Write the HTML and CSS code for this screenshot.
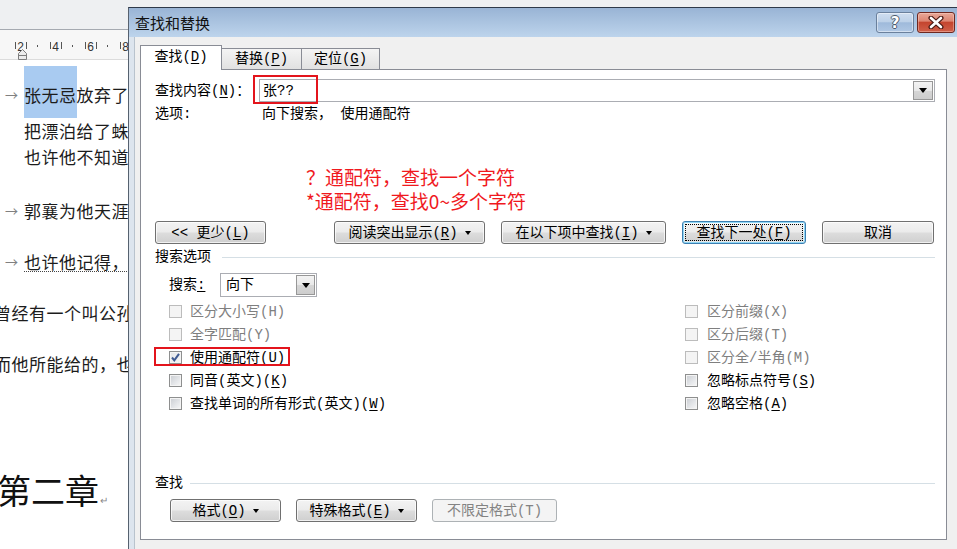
FILE: index.html
```html
<!DOCTYPE html>
<html lang="zh">
<head>
<meta charset="utf-8">
<title>查找和替换</title>
<link rel="stylesheet" href="styles.css">
</head>
<body>
<div class="screen">
  <div class="doc">
    <div class="doc-top"></div>
    <div class="ruler">
      <svg class="ruler-svg" width="140" height="30" viewBox="0 0 140 30">
        <g fill="#555">
          <rect x="15" y="12" width="1" height="7"/>
          <rect x="26" y="12" width="1" height="7"/>
          <rect x="37" y="15" width="1" height="2"/>
          <rect x="50" y="12" width="1" height="7"/>
          <rect x="61" y="12" width="1" height="7"/>
          <rect x="72" y="15" width="1" height="2"/>
          <rect x="85" y="12" width="1" height="7"/>
          <rect x="96" y="12" width="1" height="7"/>
          <rect x="107" y="15" width="1" height="2"/>
          <rect x="120" y="12" width="1" height="7"/>
        </g>
        <g class="ruler-num" fill="#333" font-size="12" text-anchor="middle">
          <text x="20.5" y="21">2</text>
          <text x="55.5" y="21">4</text>
          <text x="90.5" y="21">6</text>
          <text x="125.5" y="21">8</text>
        </g>
        <path d="M18.5 29.5 V23.5 L22.5 19.5 L26.5 23.5 V29.5 Z" fill="#ececec" stroke="#7d7d7d"/>
        <path d="M18.5 25.5 H26.5" stroke="#7d7d7d"/>
      </svg>
    </div>
    <div class="page">
      <div class="line l1"><span class="tabmark">→</span><span class="sel">张无忌</span><span>放弃了一切，</span></div>
      <div class="line ind">把漂泊给了蛛儿，</div>
      <div class="line ind">也许他不知道，</div>
      <div class="line l4"><span class="tabmark">→</span><span>郭襄为他天涯</span></div>
      <div class="line l5"><span class="tabmark">→</span><span class="dotted">也许他记得，</span></div>
      <div class="line l6">曾经有一个叫公孙</div>
      <div class="line l7">而他所能给的，也</div>
      <div class="heading">第二章<span class="pmark">↵</span></div>
    </div>
  </div>

  <div class="dialog">
    <div class="titlebar">
      <span class="title">查找和替换</span>
      <span class="tb-help">?</span>
      <span class="tb-close">
        <svg width="18" height="13" viewBox="0 0 18 13">
          <path d="M4 2 L14 11 M14 2 L4 11" stroke="#4a1a14" stroke-width="5" stroke-linecap="round"/>
          <path d="M4 2 L14 11 M14 2 L4 11" stroke="#ffffff" stroke-width="2.6" stroke-linecap="round"/>
        </svg>
      </span>
    </div>
    <div class="dlg-body">
      <div class="tabs">
        <div class="tab tab-active">查找(<u>D</u>)</div>
        <div class="tab tab-inactive t2">替换(<u>P</u>)</div>
        <div class="tab tab-inactive t3">定位(<u>G</u>)</div>
      </div>
      <div class="panel">
        <div class="find-row">
          <span class="find-lbl">查找内容(<u>N</u>)：</span>
          <div class="combo">
            <span class="combo-text">张??</span>
            <span class="drop"><span class="tri"></span></span>
          </div>
        </div>
        <div class="opt-row">
          <span class="opt-lbl">选项:</span>
          <span>向下搜索， 使用通配符</span>
        </div>

        <div class="btn-row">
          <span class="btn b1">&lt;&lt; 更少(<u>L</u>)</span>
          <span class="btn b2">阅读突出显示(<u>R</u>)<span class="dd"></span></span>
          <span class="btn b3">在以下项中查找(<u>I</u>)<span class="dd"></span></span>
          <span class="btn btn-default b4">查找下一处(<u>F</u>)</span>
          <span class="btn b5">取消</span>
        </div>

        <div class="grp">搜索选项</div>

        <div class="search-row">
          <span class="search-lbl">搜索<u>:</u></span>
          <div class="select">
            <span class="combo-text">向下</span>
            <span class="drop"><span class="tri"></span></span>
          </div>
        </div>

        <div class="checks">
          <div class="col">
            <div class="chk-row disabled"><span class="cb"></span>区分大小写(H)</div>
            <div class="chk-row disabled"><span class="cb"></span>全字匹配(Y)</div>
            <div class="chk-row"><span class="cb checked"><svg width="11" height="11" viewBox="0 0 11 11"><path d="M2 5.5 L4.3 8.3 L9 1.8" fill="none" stroke="#3f5a92" stroke-width="2"/></svg></span>使用通配符(<u>U</u>)</div>
            <div class="chk-row"><span class="cb"></span>同音(英文)(<u>K</u>)</div>
            <div class="chk-row"><span class="cb"></span>查找单词的所有形式(英文)(<u>W</u>)</div>
          </div>
          <div class="col right">
            <div class="chk-row disabled"><span class="cb"></span>区分前缀(X)</div>
            <div class="chk-row disabled"><span class="cb"></span>区分后缀(T)</div>
            <div class="chk-row disabled"><span class="cb"></span>区分全/半角(M)</div>
            <div class="chk-row"><span class="cb"></span>忽略标点符号(<u>S</u>)</div>
            <div class="chk-row"><span class="cb"></span>忽略空格(<u>A</u>)</div>
          </div>
        </div>

        <div class="grp grp2">查找</div>

        <div class="btn-row bottom-row">
          <span class="btn c1">格式(<u>O</u>)<span class="dd"></span></span>
          <span class="btn c2">特殊格式(<u>E</u>)<span class="dd"></span></span>
          <span class="btn btn-disabled c3">不限定格式(T)</span>
        </div>

        <div class="note">？通配符，查找一个字符<br>*通配符，查找0~多个字符</div>
        <div class="redbox rb1"></div>
        <div class="redbox rb2"></div>
      </div>
    </div>
  </div>
</div>
</body>
</html>
```

FILE: styles.css
```css
* {
  box-sizing: border-box;
  margin: 0;
  padding: 0;
}

html, body {
  width: 957px;
  height: 549px;
  overflow: hidden;
  background: #ffffff;
}

body {
  font-family: "Noto Sans CJK SC", sans-serif;
}

.screen {
  position: relative;
  width: 957px;
  height: 549px;
  overflow: hidden;
}

/* ---------- background document ---------- */
.doc {
  width: 957px;
  height: 549px;
  background: #ffffff;
}

.doc-top {
  height: 30px;
  background: #eef0f2;
  border-bottom: 1px solid #a5aab1;
}

.ruler {
  height: 30px;
  background: #f7f7f7;
  border-bottom: 1px solid #dcdcdc;
}

.ruler-svg {
  display: block;
}

.ruler-num {
  font-family: "Liberation Sans", sans-serif;
}

.page {
  font-family: "Noto Sans CJK SC", sans-serif;
  font-size: 17px;
  letter-spacing: 0.5px;
  color: #1c1c1c;
  white-space: nowrap;
}

.line {
  display: flex;
  height: 26px;
  line-height: 26px;
}

.ind {
  padding-left: 24px;
}

.l1 {
  margin-top: 6px;
  height: 52px;
}

.l1 > span {
  padding-top: 16px;
}

.sel {
  background: #a9cbf1;
}

.tabmark {
  width: 24px;
  padding-left: 5px;
  font-size: 13px;
  color: #808080;
  letter-spacing: 0;
}

.l4 {
  margin-top: 28px;
}

.l5 {
  margin-top: 25px;
}

.dotted {
  background-image: linear-gradient(to right, #444 50%, transparent 50%);
  background-size: 2px 1px;
  background-repeat: repeat-x;
  background-position: 0 22px;
}

.l6 {
  margin-top: 25px;
  margin-left: -6px;
}

.l7 {
  margin-top: 25px;
  margin-left: -6px;
}

.heading {
  margin-top: 93px;
  margin-left: -3px;
  font-size: 34px;
  line-height: 40px;
  letter-spacing: 0;
  color: #111;
}

.pmark {
  font-size: 10px;
  color: #888;
  margin-left: 1px;
}

/* ---------- dialog ---------- */
.dialog {
  position: absolute;
  left: 128px;
  top: 7px;
  width: 840px;
  height: 550px;
  border-top: 1px solid #2e3a4a;
  border-left: 1px solid #56616f;
  background: #f0f0f0;
  display: flex;
  flex-direction: column;
  font-family: "Liberation Mono", "Noto Sans CJK SC", monospace;
  font-size: 14px;
  color: #000;
}

.dialog u {
  text-underline-offset: 2px;
}

.titlebar {
  flex: none;
  height: 29px;
  display: flex;
  align-items: flex-start;
  padding-left: 6px;
  background: linear-gradient(#99b4d5, #bdd4ec);
}

.title {
  font-family: "Noto Sans CJK SC", sans-serif;
  font-size: 15px;
  line-height: 29px;
  color: #111;
}

.tb-help {
  margin-left: auto;
  margin-top: 4px;
  width: 38px;
  height: 21px;
  border: 1px solid #6a809c;
  border-radius: 3px;
  background: linear-gradient(#cfdef0 0%, #bdd1e8 45%, #9fbadb 52%, #b0c8e4 100%);
  box-shadow: inset 0 0 0 1px rgba(255, 255, 255, 0.45);
  display: flex;
  align-items: center;
  justify-content: center;
  font-family: "DejaVu Sans", sans-serif;
  font-weight: bold;
  font-size: 15px;
  color: #fff;
  text-shadow: 1px 0 0 #4c5a6c, -1px 0 0 #4c5a6c, 0 1px 0 #4c5a6c, 0 -1px 0 #4c5a6c;
}

.tb-close {
  margin-left: 3px;
  margin-right: 13px;
  margin-top: 4px;
  width: 38px;
  height: 21px;
  border: 1px solid #6e2820;
  border-radius: 3px;
  background: linear-gradient(#e9a898 0%, #dd8572 42%, #c4452f 50%, #d0604a 100%);
  box-shadow: inset 0 0 0 1px rgba(255, 220, 210, 0.4);
  display: flex;
  align-items: center;
  justify-content: center;
}

.tb-close svg {
  display: block;
}

.dlg-body {
  flex: 1;
  border-left: 5px solid #dde5ee;
  box-shadow: inset 1px 0 0 #b9c3cd;
  padding: 8px 0 0 6px;
}

/* tabs */
.tabs {
  display: flex;
  align-items: flex-end;
  height: 25px;
  margin-bottom: -1px;
  position: relative;
  z-index: 1;
}

.tab {
  display: flex;
  align-items: center;
  justify-content: center;
  border: 1px solid #898c95;
  line-height: 16px;
}

.tab-active {
  width: 82px;
  height: 25px;
  border-bottom: none;
  background: #ffffff;
  padding-bottom: 2px;
}

.tab-inactive {
  height: 22px;
  border-left: none;
  background: linear-gradient(#f4f4f4, #e1e1e1);
}

.t2 {
  width: 80px;
}

.t3 {
  width: 78px;
}

/* panel */
.panel {
  position: relative;
  width: 807px;
  height: 471px;
  background: #ffffff;
  border: 1px solid #898c95;
}

.find-row {
  display: flex;
  align-items: center;
  height: 23px;
  margin-top: 9px;
  padding-left: 14px;
  padding-right: 11px;
}

.find-lbl {
  width: 104px;
  flex: none;
  line-height: 16px;
}

.combo {
  flex: 1;
  height: 23px;
  border: 1px solid #abadb3;
  display: flex;
  align-items: center;
  padding-left: 3px;
  background: #fff;
}

.combo-text {
  line-height: 16px;
}

.drop {
  margin-left: auto;
  margin-right: 1px;
  width: 20px;
  height: 19px;
  border: 1px solid #979797;
  background: linear-gradient(#f3f3f3 0%, #e8e8e8 50%, #d6d6d6 51%, #cdcdcd 100%);
  display: flex;
  align-items: center;
  justify-content: center;
}

.tri {
  width: 0;
  height: 0;
  border-left: 4px solid transparent;
  border-right: 4px solid transparent;
  border-top: 5px solid #000;
}

.opt-row {
  display: flex;
  margin-top: 4px;
  padding-left: 14px;
  line-height: 16px;
  height: 16px;
}

.opt-lbl {
  width: 107px;
  flex: none;
}

/* buttons */
.btn-row {
  display: flex;
  margin-top: 99px;
  padding-left: 14px;
}

.btn {
  height: 23px;
  display: flex;
  align-items: center;
  justify-content: center;
  border: 1px solid #707070;
  border-radius: 3px;
  background: linear-gradient(#f3f3f3 0%, #ebebeb 48%, #dddddd 52%, #cfcfcf 100%);
  box-shadow: inset 0 0 0 1px rgba(255, 255, 255, 0.7);
  line-height: 16px;
  white-space: nowrap;
}

.dd {
  width: 0;
  height: 0;
  margin-left: 7px;
  border-left: 3.5px solid transparent;
  border-right: 3.5px solid transparent;
  border-top: 4px solid #000;
}

.b1 { width: 111px; }
.b2 { width: 151px; margin-left: 68px; }
.b3 { width: 165px; margin-left: 16px; }
.b4 { width: 124px; margin-left: 16px; }
.b5 { width: 112px; margin-left: 16px; }

.btn-default {
  border-color: #3c7fb1;
  box-shadow: inset 0 0 0 1px #8fd6f5, inset 0 0 0 2px rgba(255, 255, 255, 0.5);
  outline: 1px dotted #000;
  outline-offset: -4px;
}

.btn-disabled {
  border-color: #adb2b5;
  background: #f4f4f4;
  color: #838383;
  box-shadow: none;
}

/* group header */
.grp {
  display: flex;
  align-items: center;
  margin-top: 5px;
  padding-left: 14px;
  padding-right: 11px;
  line-height: 16px;
  height: 16px;
}

.grp::after {
  content: "";
  flex: 1;
  height: 1px;
  margin-left: 11px;
  background: #d5dfe5;
}

.grp2 {
  margin-top: 60px;
}

.grp2::after {
  margin-left: 7px;
}

/* search direction */
.search-row {
  display: flex;
  align-items: center;
  height: 24px;
  margin-top: 8px;
  padding-left: 28px;
}

.search-lbl {
  width: 51px;
  flex: none;
  line-height: 16px;
}

.select {
  width: 97px;
  height: 24px;
  border: 1px solid #abadb3;
  display: flex;
  align-items: center;
  padding-left: 5px;
  background: #fff;
}

.select .drop {
  width: 19px;
  height: 20px;
}

/* checkboxes */
.checks {
  display: grid;
  grid-template-columns: 516px 1fr;
  margin-top: 3px;
  padding-left: 28px;
}

.col {
  display: flex;
  flex-direction: column;
}

.chk-row {
  height: 23px;
  display: flex;
  align-items: center;
  line-height: 16px;
  white-space: nowrap;
}

.cb {
  flex: none;
  width: 13px;
  height: 13px;
  margin-right: 8px;
  border: 1px solid #8e8f8f;
  background: linear-gradient(135deg, #c9ccd1 0%, #e3e5e8 55%, #f8f8f8 100%);
  box-shadow: inset 0 0 0 1px #f4f4f4;
  display: flex;
  align-items: center;
  justify-content: center;
}

.right .cb {
  margin-right: 9px;
}

.cb.checked {
  background: linear-gradient(135deg, #e4e6e9 0%, #f5f5f5 100%);
}

.cb svg {
  display: block;
}

.disabled {
  color: #7f7f7f;
}

.disabled .cb {
  border-color: #bcbcbc;
  background: #f4f4f4;
  box-shadow: none;
}

/* bottom buttons */
.bottom-row {
  margin-top: 8px;
  padding-left: 29px;
}

.c1 { width: 111px; }
.c2 { width: 121px; margin-left: 15px; }
.c3 { width: 125px; margin-left: 15px; }

/* annotations drawn on the screenshot */
.note {
  position: absolute;
  left: 165px;
  top: 95px;
  font-family: "Noto Sans CJK SC", sans-serif;
  font-size: 19px;
  line-height: 24px;
  color: #f0191e;
  white-space: nowrap;
}

.redbox {
  position: absolute;
  border: 2px solid #e3141c;
}

.rb1 {
  left: 112px;
  top: 5px;
  width: 65px;
  height: 29px;
}

.rb2 {
  left: 13px;
  top: 277px;
  width: 136px;
  height: 19px;
}
```
